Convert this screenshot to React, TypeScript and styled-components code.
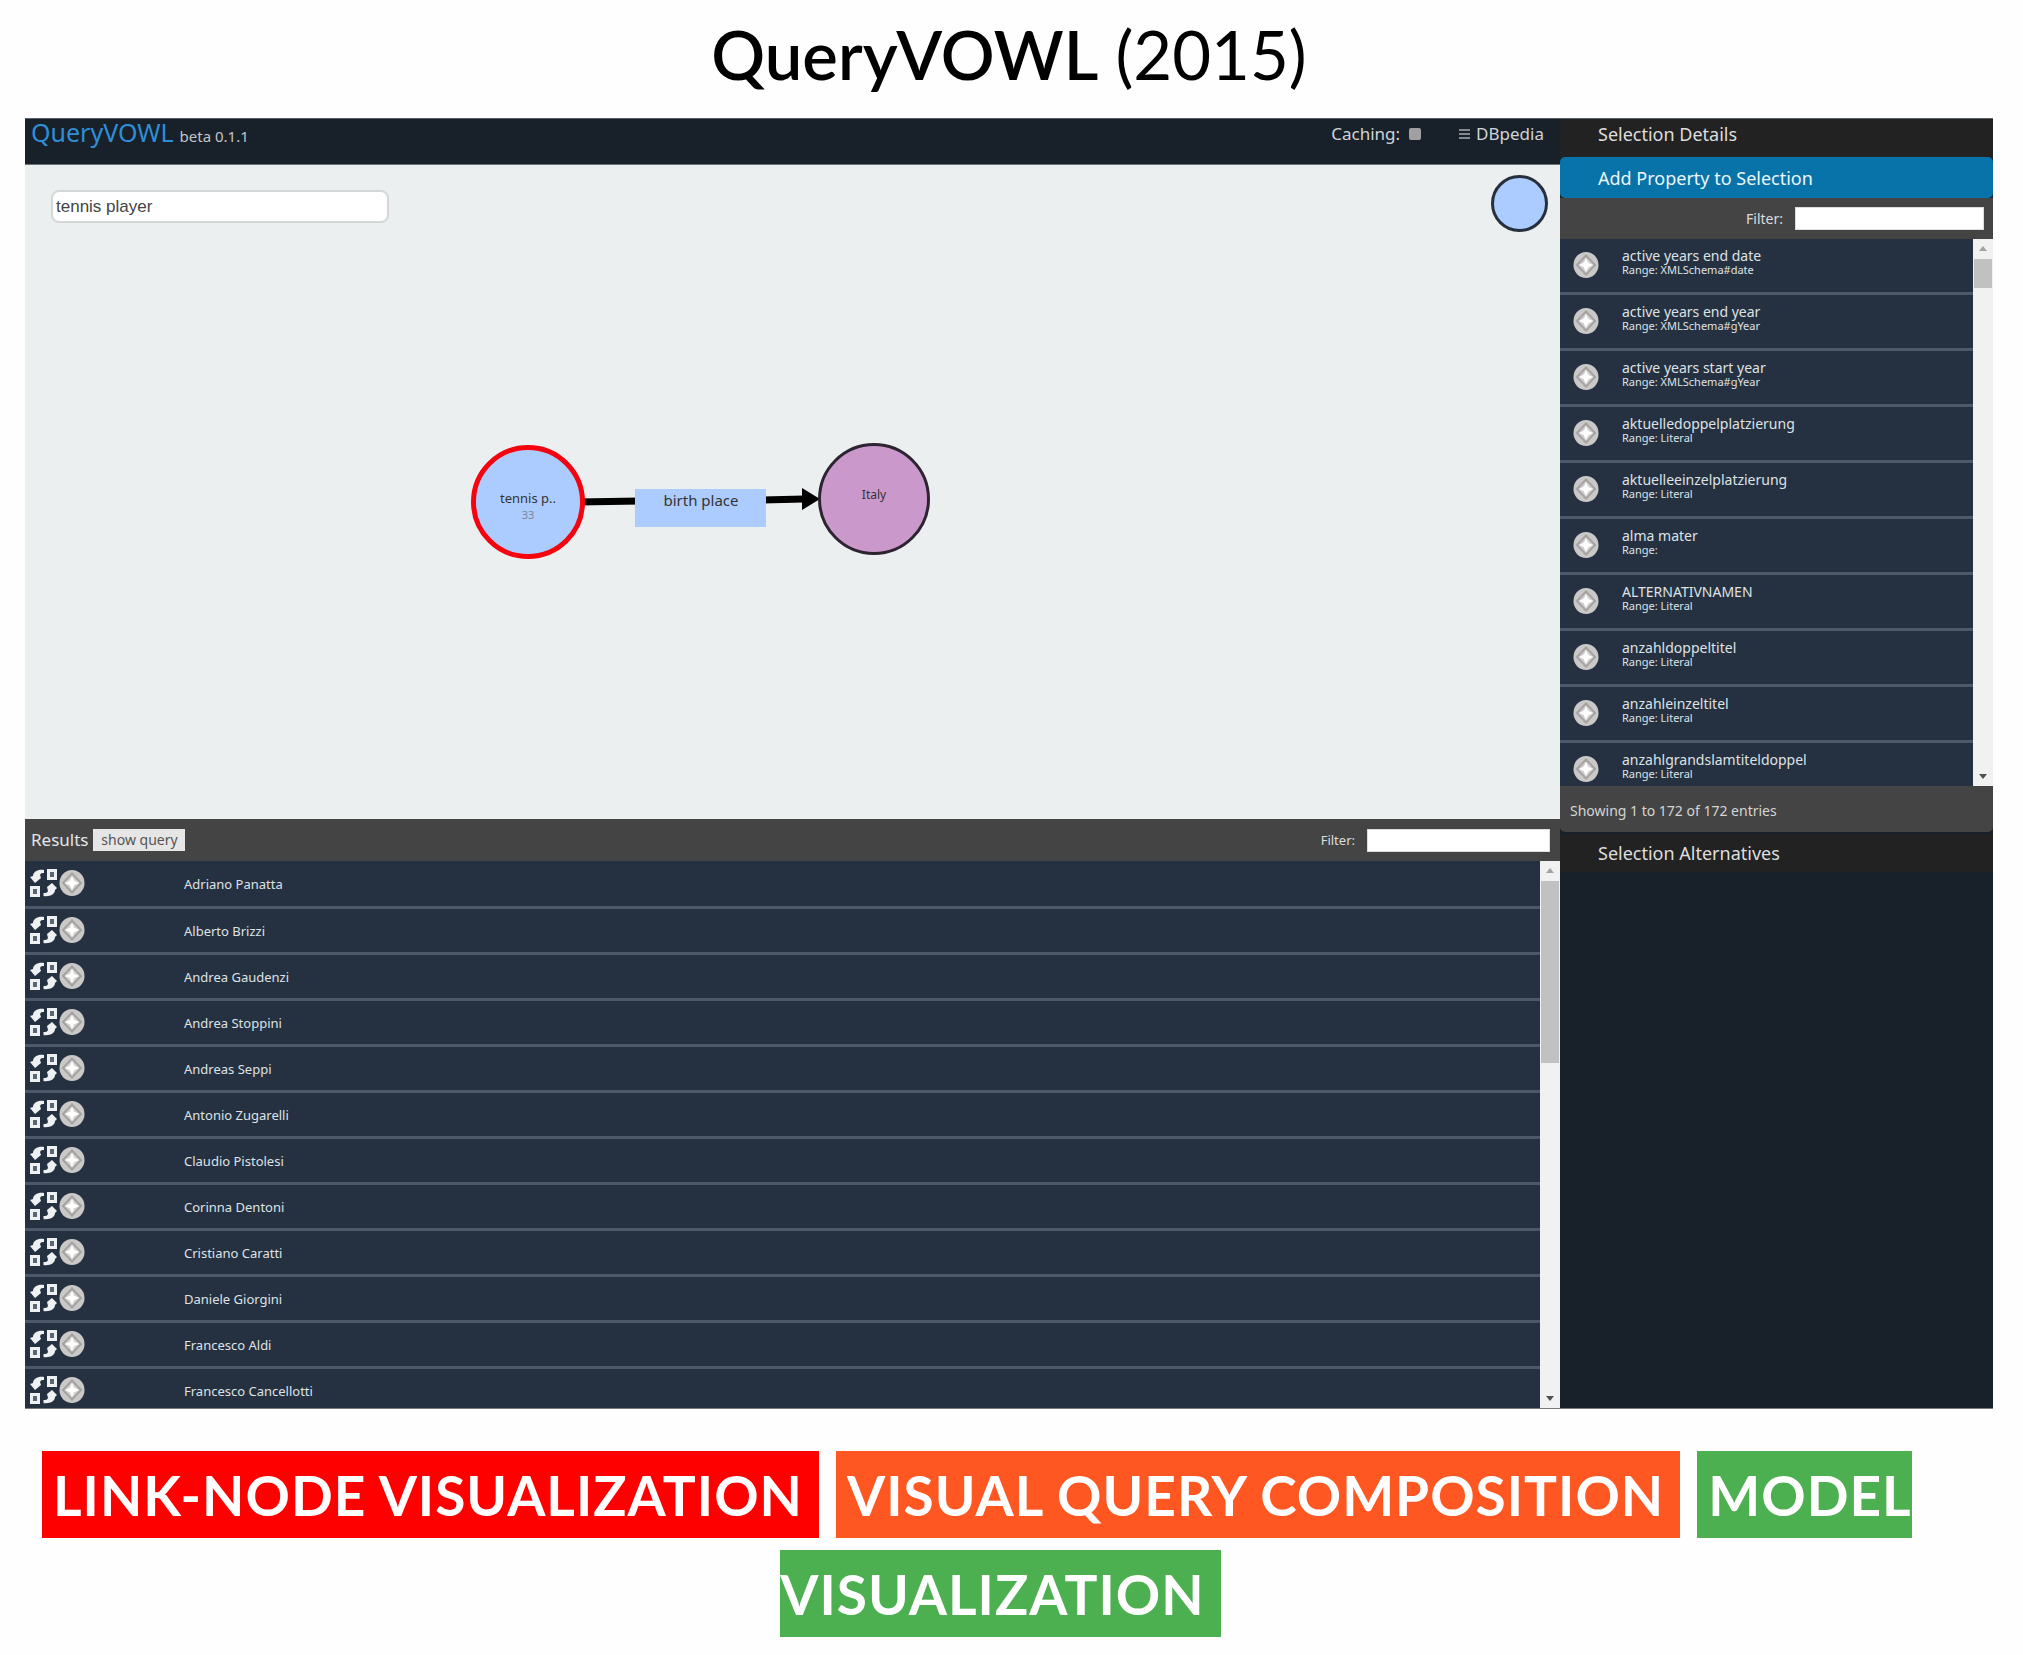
import React from 'react';
import styled, { createGlobalStyle } from 'styled-components';

const sans = '"Noto Sans", "Open Sans", sans-serif';

const GlobalStyle = createGlobalStyle`
  *, *::before, *::after { box-sizing: border-box; }
  body { margin: 0; background: #fefefe; font-family: Lato, sans-serif; color: #000; }
  button, input { font-family: inherit; }
`;

const Page = styled.main`
  padding: 0 30px 17px 25px;
`;

const Title = styled.h1`
  margin: 0;
  height: 118px;
  font-size: 67px;
  line-height: 109px;
  font-weight: 400;
  text-align: center;
`;

const Strong = styled.span`
  font-weight: 600;
`;

const Frame = styled.section`
  display: grid;
  grid-template-columns: minmax(0, 1fr) 433px;
  background: #18202a;
  color: #e4e6e8;
  font-family: ${sans};
  border-top: 1px solid #59616a;
  border-bottom: 1px solid #777b80;
`;

const Main = styled.div`
  display: flex;
  flex-direction: column;
  min-width: 0;
`;

const TopBar = styled.header`
  display: flex;
  align-items: center;
  height: 46px;
  padding: 0 16px 15px 6px;
  border-bottom: 1px solid #6d747a;
`;

const Brand = styled.h2`
  margin: 0;
  flex: 1;
  display: flex;
  align-items: baseline;
  gap: 6px;
  font-size: 25px;
  line-height: 30px;
  font-weight: 400;
  color: #2f8fd6;
`;

const Version = styled.small`
  font-size: 15px;
  color: #c3c5c8;
`;

const Caching = styled.label`
  display: flex;
  align-items: center;
  gap: 9px;
  font-size: 17px;
  line-height: 24px;
  color: #d2d4d6;
`;

const CacheBox = styled.input`
  appearance: none;
  margin: 0;
  width: 12px;
  height: 12px;
  border-radius: 2px;
  background: #a0a0a0;
`;

const MenuButton = styled.button`
  display: flex;
  align-items: center;
  gap: 6px;
  margin-left: 38px;
  padding: 0;
  border: 0;
  background: none;
  color: #d2d4d6;
  font-size: 17px;
  line-height: 24px;
`;

const Canvas = styled.div`
  position: relative;
  height: 654px;
  padding: 25px 12px 0 26px;
  background: #ebeff0;
`;

const Search = styled.input`
  width: 338px;
  height: 33px;
  padding: 0 3px;
  border: 2px solid #d4d6d7;
  border-radius: 8px;
  background: #fff;
  color: #444;
  font-family: "Liberation Sans", Arial, sans-serif;
  font-size: 17px;
`;

const NewNode = styled.button`
  position: absolute;
  top: 10px;
  right: 12px;
  width: 57px;
  height: 57px;
  padding: 0;
  border: 3px solid #26303c;
  border-radius: 50%;
  background: #acccff;
`;

const Graph = styled.svg`
  position: absolute;
  left: 445px;
  top: 274px;
  font-family: ${sans};
`;

const Toolbar = styled.div<{ $h: number; $pad: string }>`
  display: flex;
  align-items: center;
  height: ${(p) => p.$h}px;
  padding: ${(p) => p.$pad};
  background: #444;
`;

const ResultsTitle = styled.h3`
  margin: 0;
  font-size: 17px;
  line-height: 24px;
  font-weight: 400;
`;

const QueryButton = styled.button`
  width: 92px;
  height: 22px;
  margin-left: 5px;
  padding: 0;
  border: 0;
  background: #e6e6e6;
  color: #555;
  font-size: 14px;
  line-height: 20px;
`;

const Filter = styled.label<{ $size: number }>`
  display: flex;
  align-items: center;
  gap: 12px;
  margin-left: auto;
  font-size: ${(p) => p.$size}px;
  line-height: 20px;
  color: #dcdcdc;
`;

const FilterInput = styled.input<{ $w: number }>`
  width: ${(p) => p.$w}px;
  height: 23px;
  padding: 0 4px;
  border: 1px solid #ddd;
  background: #fff;
`;

const Scroller = styled.div`
  display: grid;
  grid-template-columns: minmax(0, 1fr) 20px;
  grid-template-rows: 100%;
  height: 547px;
  overflow: hidden;
`;

const ScrollBar = styled.div`
  display: flex;
  flex-direction: column;
  align-items: center;
  background: #f1f1f1;
`;

const Thumb = styled.div<{ $h: number }>`
  width: 18px;
  height: ${(p) => p.$h}px;
  margin-bottom: auto;
  background: #c1c1c1;
`;

const ArrowButton = styled.button`
  display: flex;
  align-items: center;
  justify-content: center;
  width: 20px;
  height: 20px;
  padding: 0;
  border: 0;
  background: none;
`;

const ResultTable = styled.table`
  width: 100%;
  border-collapse: collapse;
  align-self: start;
  background: #253141;
`;

const ResultRow = styled.tr`
  height: 46px;
  border-bottom: 3px solid #4a5867;
`;

const ActionCell = styled.td`
  width: 159px;
  padding: 0 0 0 5px;
`;

const NameCell = styled.td`
  padding: 1px 0 0;
  font-size: 13px;
  line-height: 20px;
  color: #dfe2e5;
`;

const Actions = styled.div`
  display: flex;
  align-items: center;
  gap: 1px;
`;

const IconButton = styled.button`
  display: flex;
  padding: 0;
  border: 0;
  background: none;
`;

const Side = styled.aside`
  display: flex;
  flex-direction: column;
  min-width: 0;
`;

const Heading = styled.button<{ $active?: boolean; $raised?: boolean }>`
  height: ${(p) => (p.$active ? 41 : 38)}px;
  padding: 0 0 ${(p) => (p.$raised ? 8 : 0)}px 38px;
  border: 0;
  border-radius: ${(p) => (p.$active ? '5px' : '0')};
  background: ${(p) => (p.$active ? '#0773a8' : '#222')};
  color: ${(p) => (p.$active ? '#eef6fb' : '#dedede')};
  font-size: 18px;
  line-height: 24px;
  text-align: left;
`;

const Properties = styled.ul`
  margin: 0;
  padding: 0;
  list-style: none;
  background: #253141;
`;

const Property = styled.li`
  display: flex;
  align-items: flex-start;
  gap: 23px;
  height: 56px;
  padding: 12px 0 0 13px;
  border-bottom: 3px solid #4a5867;
  background: #253141;
`;

const PropertyText = styled.div`
  margin-top: -3px;
  font-size: 14px;
  line-height: 16px;
  color: #dfe2e5;
`;

const Range = styled.div`
  font-size: 11px;
  line-height: 12px;
`;

const Info = styled.p`
  margin: 0 0 2px;
  height: 46px;
  padding: 4px 0 0 10px;
  border-radius: 0 0 5px 5px;
  background: #444;
  color: #d4d4d4;
  font-size: 14px;
  line-height: 42px;
`;

const Tags = styled.p`
  margin: 37px 0 0;
  text-indent: 17px;
  text-align: left;
  text-align-last: center;
  font-size: 55px;
  line-height: 99px;
  font-weight: 700;
  color: #fff;
`;

const Tag = styled.span<{ $bg: string }>`
  margin-right: 17px;
  padding: 11px 16px 10px 11px;
  background: ${(p) => p.$bg};
  letter-spacing: 1px;
`;

const PlusIcon = () => (
  <svg width="26" height="28" viewBox="0 0 26 28" aria-hidden="true">
    <ellipse cx="13" cy="14" rx="12.5" ry="13" fill="#cbc9c8" />
    <path d="M13 4.500L22 14L13 23.500L4 14Z" fill="#d2d0cf" stroke="#a5a3a2" strokeWidth="2" />
    <path d="M13 7 L15.200 11.800 L20 14 L15.200 16.200 L13 21 L10.800 16.200 L6 14 L10.800 11.800Z" fill="#fff" />
  </svg>
);

const SwapIcon = () => (
  <svg width="28" height="30" viewBox="0 0 28 30" aria-hidden="true">
    <g fill="#5b6673" stroke="#eef0f2" strokeWidth="3">
      <rect x="18.500" y="2.500" width="7" height="8" />
      <rect x="1.500" y="19.500" width="7" height="8" />
    </g>
    <path d="M14 2 C8 1 3 4 3 8 L0 9 L5 15 L11 10 L10 7 C11 5 12 5 14 5Z" fill="#eef0f2" />
    <path d="M13.500 28 C20 29 25 26 25 22 L27 20 L22 15 L17 19 L18 23 C17 25 16 25 13.500 25Z" fill="#eef0f2" />
  </svg>
);

const Arrow = ({ down }: { down?: boolean }) => (
  <svg width="8" height="6" viewBox="0 0 8 6" aria-hidden="true">
    <path d={down ? 'M0 1H8L4 6Z' : 'M0 5H8L4 0Z'} fill={down ? '#505050' : '#a3a3a3'} />
  </svg>
);

const Bar = ({ thumb }: { thumb: number }) => (
  <ScrollBar>
    <ArrowButton aria-label="Scroll up"><Arrow /></ArrowButton>
    <Thumb $h={thumb} />
    <ArrowButton aria-label="Scroll down"><Arrow down /></ArrowButton>
  </ScrollBar>
);

const people = [
  'Adriano Panatta', 'Alberto Brizzi', 'Andrea Gaudenzi', 'Andrea Stoppini',
  'Andreas Seppi', 'Antonio Zugarelli', 'Claudio Pistolesi', 'Corinna Dentoni',
  'Cristiano Caratti', 'Daniele Giorgini', 'Francesco Aldi', 'Francesco Cancellotti',
];

const properties: [string, string][] = [
  ['active years end date', 'XMLSchema#date'],
  ['active years end year', 'XMLSchema#gYear'],
  ['active years start year', 'XMLSchema#gYear'],
  ['aktuelledoppelplatzierung', 'Literal'],
  ['aktuelleeinzelplatzierung', 'Literal'],
  ['alma mater', ''],
  ['ALTERNATIVNAMEN', 'Literal'],
  ['anzahldoppeltitel', 'Literal'],
  ['anzahleinzeltitel', 'Literal'],
  ['anzahlgrandslamtiteldoppel', 'Literal'],
];

export default function App() {
  return (
    <Page>
      <GlobalStyle />
      <Title><Strong>QueryVOWL</Strong> (2015)</Title>
      <Frame>
        <Main>
          <TopBar>
            <Brand>QueryVOWL <Version>beta 0.1.1</Version></Brand>
            <Caching>Caching: <CacheBox type="checkbox" /></Caching>
            <MenuButton>
              <svg width="11" height="12" viewBox="0 0 11 12" aria-hidden="true">
                <path d="M0 2H11M0 6H11M0 10H11" stroke="#85898e" strokeWidth="2" />
              </svg>
              DBpedia
            </MenuButton>
          </TopBar>
          <Canvas>
            <Search aria-label="Search class" defaultValue="tennis player" />
            <NewNode aria-label="Add node" />
            <Graph width="462" height="120" viewBox="0 0 462 120" textAnchor="middle" fill="#333">
              <path d="M108 63L170 62M290 61L334 60" stroke="#000" strokeWidth="7" />
              <path d="M332 49L350 60L332 71Z" fill="#000" />
              <circle cx="58" cy="63" r="54.500" fill="#acccff" stroke="#f5040f" strokeWidth="5" />
              <circle cx="404" cy="60" r="54.500" fill="#cb98cc" stroke="#2c2430" strokeWidth="3" />
              <rect x="165" y="50" width="131" height="38" fill="#acccff" />
              <text x="58" y="64" fontSize="13">tennis p..</text>
              <text x="58" y="80" fontSize="11" fill="#7b8796">33</text>
              <text x="231" y="67" fontSize="15">birth place</text>
              <text x="404" y="60" fontSize="12">Italy</text>
            </Graph>
          </Canvas>
          <Toolbar $h={42} $pad="0 10px 0 6px">
            <ResultsTitle>Results</ResultsTitle>
            <QueryButton>show query</QueryButton>
            <Filter $size={13}>Filter: <FilterInput $w={183} type="text" /></Filter>
          </Toolbar>
          <Scroller>
            <ResultTable>
              <tbody>
                {people.map((name) => (
                  <ResultRow key={name}>
                    <ActionCell>
                      <Actions>
                        <IconButton aria-label={`Swap with ${name}`}><SwapIcon /></IconButton>
                        <IconButton aria-label={`Add ${name}`}><PlusIcon /></IconButton>
                      </Actions>
                    </ActionCell>
                    <NameCell>{name}</NameCell>
                  </ResultRow>
                ))}
              </tbody>
            </ResultTable>
            <Bar thumb={182} />
          </Scroller>
        </Main>
        <Side>
          <Heading $raised>Selection Details</Heading>
          <Heading $active>Add Property to Selection</Heading>
          <Toolbar $h={41} $pad="0 9px 0 10px">
            <Filter $size={14}>Filter: <FilterInput $w={189} type="text" /></Filter>
          </Toolbar>
          <Scroller>
            <Properties>
              {properties.map(([name, range]) => (
                <Property key={name}>
                  <IconButton aria-label={`Add ${name}`}><PlusIcon /></IconButton>
                  <PropertyText>
                    {name}
                    <Range>Range: {range}</Range>
                  </PropertyText>
                </Property>
              ))}
            </Properties>
            <Bar thumb={29} />
          </Scroller>
          <Info>Showing 1 to 172 of 172 entries</Info>
          <Heading>Selection Alternatives</Heading>
        </Side>
      </Frame>
      <Tags>
        <Tag $bg="#ff0000">LINK-NODE VISUALIZATION</Tag>
        <Tag $bg="#ff5722">VISUAL QUERY COMPOSITION</Tag>
        <Tag $bg="#4caf50">MODEL VISUALIZATION</Tag>
      </Tags>
    </Page>
  );
}
